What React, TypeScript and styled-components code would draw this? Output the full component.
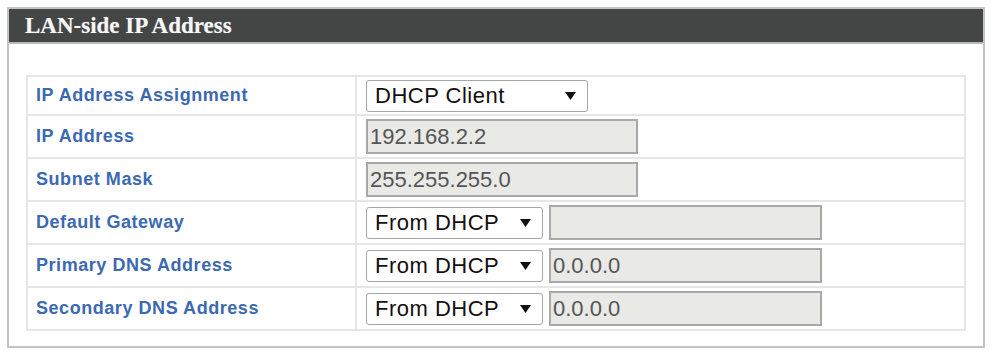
import React from 'react'
import styled, { createGlobalStyle } from 'styled-components'

const GlobalStyle = createGlobalStyle`
  html, body {
    margin: 0;
    padding: 0;
    background: #ffffff;
  }
  body {
    font-family: "Liberation Sans", Arial, sans-serif;
  }
`

const Panel = styled.div`
  box-sizing: border-box;
  margin: 7px 0 0 7px;
  width: 978px;
  height: 341px;
  border: 2px solid #c4c4c4;
  background: #ffffff;
  display: flex;
  flex-direction: column;
`

const PanelHeader = styled.div`
  box-sizing: border-box;
  height: 38px;
  background: #444645;
  border-bottom: 2px solid #b9bbba;
  display: flex;
  align-items: center;
  padding-left: 16px;
  color: #f7f7f7;
  font-family: "Liberation Serif", "Times New Roman", serif;
  font-weight: 700;
  font-size: 23px;
  text-shadow: 0 0 1px rgba(255, 255, 255, 0.4);
`

const PanelBody = styled.div`
  padding: 31px 17px 15px;
`

const Table = styled.div`
  border: 2px solid #e6e6e6;
  display: flex;
  flex-direction: column;
`

const Row = styled.div<{ $first?: boolean }>`
  box-sizing: border-box;
  display: grid;
  grid-template-columns: 329px 1fr;
  height: ${p => (p.$first ? '37px' : '43px')};
  border-top: ${p => (p.$first ? 'none' : '2px solid #e6e6e6')};
`

const Label = styled.div`
  display: flex;
  align-items: center;
  padding-left: 8px;
  border-right: 2px solid #e6e6e6;
  color: #3b69b2;
  font-weight: 700;
  font-size: 18px;
  letter-spacing: 0.55px;
`

const Value = styled.div`
  display: flex;
  align-items: center;
  gap: 6px;
  padding-left: 9px;
`

const Select = styled.div<{ $width: number }>`
  box-sizing: border-box;
  width: ${p => p.$width}px;
  height: 32px;
  border: 1px solid #a6a6a6;
  border-radius: 3px;
  background: #ffffff;
  display: flex;
  align-items: center;
  justify-content: space-between;
  padding: 0 11px 0 8px;
  color: #141010;
  font-size: 22px;
  letter-spacing: 0.5px;
`

const Field = styled.div<{ $width: number }>`
  box-sizing: border-box;
  width: ${p => p.$width}px;
  height: 35px;
  border: 2px solid #a9a9a9;
  background: #e9e9e5;
  display: flex;
  align-items: center;
  padding-left: 2px;
  color: #555558;
  font-size: 22px;
`

const Arrow = () => (
  <svg width="11" height="8" viewBox="0 0 11 8">
    <polygon points="0,0 11,0 5.5,8" fill="#111" />
  </svg>
)

const DropDown: React.FC<{ value: string; width: number }> = ({ value, width }) => (
  <Select $width={width}>
    <span>{value}</span>
    <Arrow />
  </Select>
)

const rows = [
  { label: 'IP Address Assignment', select: 'DHCP Client' },
  { label: 'IP Address', field: '192.168.2.2' },
  { label: 'Subnet Mask', field: '255.255.255.0' },
  { label: 'Default Gateway', select: 'From DHCP', field: '' },
  { label: 'Primary DNS Address', select: 'From DHCP', field: '0.0.0.0' },
  { label: 'Secondary DNS Address', select: 'From DHCP', field: '0.0.0.0' },
]

export default function App() {
  return (
    <>
      <GlobalStyle />
      <Panel>
        <PanelHeader>LAN-side IP Address</PanelHeader>
        <PanelBody>
          <Table>
            {rows.map((r, i) => (
              <Row key={r.label} $first={i === 0}>
                <Label>{r.label}</Label>
                <Value>
                  {r.select !== undefined && (
                    <DropDown value={r.select} width={r.field !== undefined ? 177 : 222} />
                  )}
                  {r.field !== undefined && (
                    <Field $width={r.select !== undefined ? 273 : 272}>{r.field}</Field>
                  )}
                </Value>
              </Row>
            ))}
          </Table>
        </PanelBody>
      </Panel>
    </>
  )
}
